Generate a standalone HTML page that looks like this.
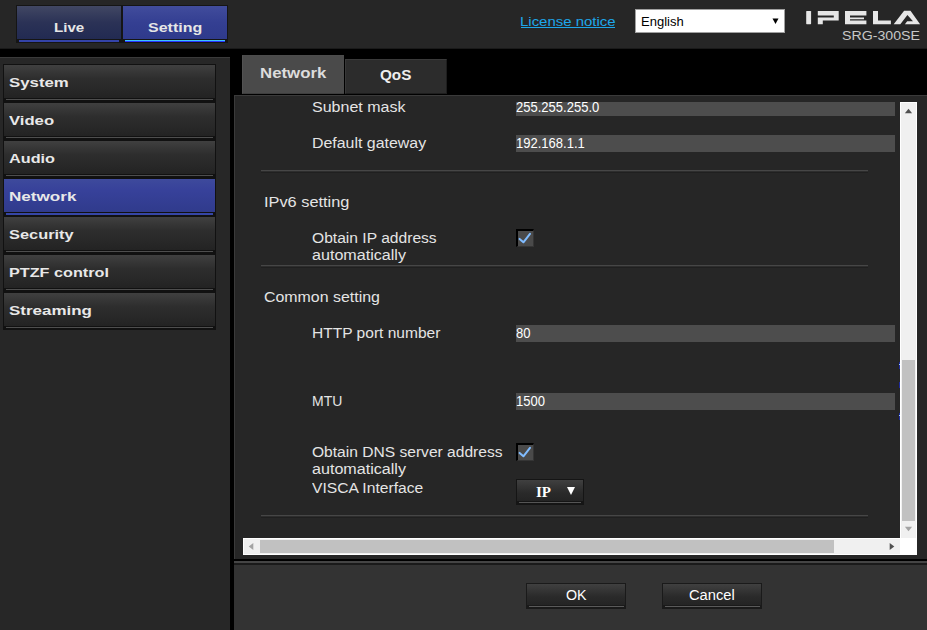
<!DOCTYPE html>
<html><head><meta charset="utf-8">
<style>
*{margin:0;padding:0;box-sizing:border-box}
html,body{width:927px;height:630px;overflow:hidden;background:#000}
body{position:relative;font-family:"Liberation Sans",sans-serif}
.a{position:absolute}
.t{position:absolute;white-space:nowrap;line-height:20px;height:20px}
.lbl{font-size:14px;color:#e4e4e4;transform:scaleX(1.12);transform-origin:0 0}
.val{font-size:14px;color:#fff;transform:scaleX(0.93);transform-origin:0 0}
.sb{position:absolute;left:3px;width:213px;height:38px;background:#111}
.sb .in{position:absolute;left:1px;top:1px;width:211px;height:33px;background:linear-gradient(#404040,#2e2e2e 40%,#232323)}
.sb .ln{position:absolute;left:3px;top:35px;width:207px;height:1px;background:#4e4e4e}
.sb .tx{position:absolute;left:6px;top:9px;font:bold 13.5px/20px "Liberation Sans",sans-serif;color:#e8e8e8;white-space:nowrap;transform:scaleX(1.2);transform-origin:0 0}
.sb.act .in{background:linear-gradient(#3e4a9c,#37419a 35%,#303b8c)}
.sb.act .ln{background:#3646a6;height:2px;top:35px}
.inp{position:absolute;left:516px;width:379px;background:#4d4d4d}
.sep{position:absolute;left:261px;width:607px;height:3px;background:linear-gradient(#464646 0,#464646 1px,#2d2d2d 1px,#2d2d2d 2px,#1f1f1f 2px)}
.cb{position:absolute;left:516px;width:18px;height:18px;background:#4a4a4a;border-top:2px solid #000;border-left:2px solid #000;border-right:1px solid #353535;border-bottom:1px solid #353535}
.btn{position:absolute;top:583px;width:100px;height:26px;background:#1a1a1a}
.btn .in{position:absolute;left:1px;top:1px;width:98px;height:21px;background:linear-gradient(#404040,#2a2a2a 60%,#242424)}
.btn .ln{position:absolute;left:3px;top:23px;width:95px;height:1px;background:#5a5a5a}
.btn .tx{position:absolute;left:0;width:100px;top:2px;text-align:center;font:14px/20px "Liberation Sans",sans-serif;color:#fff}
</style></head><body>

<!-- header -->
<div class="a" style="left:0;top:0;width:927px;height:49px;background:#262626"></div>
<div class="a" style="left:0;top:48px;width:927px;height:1px;background:#1a1a1a"></div>
<div class="a" style="left:16px;top:5px;width:106px;height:38px;background:#151515"></div>
<div class="a" style="left:17px;top:6px;width:104px;height:33px;background:linear-gradient(#414763,#2b3256 50%,#222a52)"></div>
<div class="a" style="left:19px;top:40px;width:100px;height:2px;background:#3443a8"></div>
<div class="a" style="left:122px;top:5px;width:106px;height:38px;background:#151515"></div>
<div class="a" style="left:123px;top:6px;width:104px;height:33px;background:linear-gradient(#414c9c,#343f92 50%,#2f3a8c)"></div>
<div class="a" style="left:125px;top:40px;width:100px;height:1px;background:#3cc4ff"></div>
<div class="a" style="left:125px;top:41px;width:100px;height:1px;background:#2a36ff"></div>
<div class="t" style="left:54px;top:18px;font-weight:bold;font-size:13px;color:#e6e6e6;transform:scaleX(1.16);transform-origin:0 0">Live</div>
<div class="t" style="left:148px;top:18px;font-weight:bold;font-size:13px;color:#e6e6e6;transform:scaleX(1.23);transform-origin:0 0">Setting</div>

<div class="t" style="left:520px;top:12px;font-size:13px;color:#1ea6ea;transform:scaleX(1.15);transform-origin:0 0">License notice</div>
<div class="a" style="left:521px;top:27px;width:94px;height:1px;background:#1ea6ea"></div>

<div class="a" style="left:635px;top:9px;width:150px;height:24px;background:#fff;border:1px solid #a0a0a0"></div>
<div class="t" style="left:641px;top:12px;font-size:13px;color:#000">English</div>
<svg class="a" style="left:771px;top:17px" width="9" height="8"><path d="M1.5 1.5h6l-3 5.5z" fill="#000"/></svg>

<svg class="a" style="left:800px;top:5px" width="127" height="25" viewBox="800 5 127 25">
<g fill="#e6e6e6">
<rect x="806.2" y="11" width="4.9" height="13.2" rx="0.6"/>
<path d="M817.8 11H838.7V20.5H822.8V24.2H817.8V17.4H833.8V15.4H817.8Z"/>
<path d="M845 11H866.4V15.4H850V17.4H864V19.2H850V20.5H866.4V24.2H845Z"/>
<path d="M873 11H878V20.5H890.9V24.2H873Z"/>
<path d="M893.7 24.3L904.1 10.8H910.5L920.1 24.3H904.9L907.2 21.3H913L907.4 14.9L900.3 24.3Z"/>
</g></svg>
<div class="t" style="left:842px;top:26px;font-size:12px;color:#c8c8c8;transform:scaleX(1.18);transform-origin:0 0">SRG-300SE</div>

<!-- left panel -->
<div class="a" style="left:0;top:57px;width:230px;height:573px;background:#272727;border-top:1px solid #3a3a3a"></div>
<div class="sb" style="top:64px"><div class="in"></div><div class="ln"></div><div class="tx" style="transform:scaleX(1.244)">System</div></div>
<div class="sb" style="top:102px"><div class="in"></div><div class="ln"></div><div class="tx" style="transform:scaleX(1.234)">Video</div></div>
<div class="sb" style="top:140px"><div class="in"></div><div class="ln"></div><div class="tx" style="transform:scaleX(1.204)">Audio</div></div>
<div class="sb act" style="top:178px"><div class="in"></div><div class="ln"></div><div class="tx" style="transform:scaleX(1.266)">Network</div></div>
<div class="sb" style="top:216px"><div class="in"></div><div class="ln"></div><div class="tx" style="transform:scaleX(1.213)">Security</div></div>
<div class="sb" style="top:254px"><div class="in"></div><div class="ln"></div><div class="tx" style="transform:scaleX(1.200)">PTZF control</div></div>
<div class="sb" style="top:292px"><div class="in"></div><div class="ln"></div><div class="tx" style="transform:scaleX(1.257)">Streaming</div></div>

<!-- tabs -->
<div class="a" style="left:242px;top:55px;width:102px;height:39px;background:#4a4a4a;border-top:1px solid #4c4c4c;border-left:1px solid #525252;border-bottom:1px solid #3e3e3e"></div>
<div class="t" style="left:260px;top:63px;font-weight:bold;font-size:14px;color:#dcdcdc;transform:scaleX(1.2);transform-origin:0 0">Network</div>
<div class="a" style="left:345px;top:59px;width:102px;height:35px;background:#2c2c2c;border-left:1px solid #383838;border-top:1px solid #3a3a3a;border-right:1px solid #1e1e1e;border-bottom:1px solid #1e1e1e"></div>
<div class="t" style="left:380px;top:65px;font-weight:bold;font-size:14px;color:#eee;transform:scaleX(1.09);transform-origin:0 0">QoS</div>

<!-- content panel -->
<div class="a" style="left:234px;top:95px;width:693px;height:464px;background:#262626;border-top:1px solid #3a3a3a;border-left:1px solid #3a3a3a"></div>

<div class="t lbl" style="left:312px;top:97px;transform:scaleX(1.145)">Subnet mask</div>
<div class="inp" style="top:102px;height:14px;overflow:hidden"><div class="t val" style="left:0;top:-5px">255.255.255.0</div></div>
<div class="t lbl" style="left:312px;top:133px;transform:scaleX(1.137)">Default gateway</div>
<div class="inp" style="top:135px;height:17px"></div>
<div class="t val" style="left:516px;top:133px">192.168.1.1</div>
<div class="sep" style="top:170px"></div>

<div class="t lbl" style="left:264px;top:192px;transform:scaleX(1.167)">IPv6 setting</div>
<div class="t lbl" style="left:312px;top:228px;transform:scaleX(1.115)">Obtain IP address</div>
<div class="t lbl" style="left:312px;top:245px;transform:scaleX(1.15)">automatically</div>
<div class="cb" style="top:229px"><svg class="a" style="left:0;top:0" width="16" height="16" viewBox="518 231 16 16"><path d="M519.6 238.9L523.4 242.3L530 233.8" stroke="#80bcff" stroke-width="2" fill="none" stroke-linecap="round" stroke-linejoin="round"/></svg></div>
<div class="sep" style="top:265px"></div>

<div class="t lbl" style="left:264px;top:287px;transform:scaleX(1.137)">Common setting</div>
<div class="t lbl" style="left:312px;top:323px;transform:scaleX(1.11)">HTTP port number</div>
<div class="inp" style="top:325px;height:17px"></div>
<div class="t val" style="left:516px;top:323px">80</div>
<div class="t lbl" style="left:312px;top:391px;transform:scaleX(1.0)">MTU</div>
<div class="inp" style="top:393px;height:17px"></div>
<div class="t val" style="left:516px;top:391px">1500</div>
<div class="t lbl" style="left:312px;top:442px;transform:scaleX(1.113)">Obtain DNS server address</div>
<div class="t lbl" style="left:312px;top:459px;transform:scaleX(1.15)">automatically</div>
<div class="cb" style="top:443px"><svg class="a" style="left:0;top:0" width="16" height="16" viewBox="518 231 16 16"><path d="M519.6 238.9L523.4 242.3L530 233.8" stroke="#80bcff" stroke-width="2" fill="none" stroke-linecap="round" stroke-linejoin="round"/></svg></div>
<div class="t lbl" style="left:312px;top:478px;transform:scaleX(1.116)">VISCA Interface</div>
<div class="a" style="left:516px;top:479px;width:68px;height:26px;background:#151515"></div>
<div class="a" style="left:517px;top:480px;width:66px;height:21px;background:linear-gradient(#404040,#2a2a2a 60%,#242424)"></div>
<div class="a" style="left:519px;top:502px;width:62px;height:1px;background:#555"></div>
<div class="t" style="left:536px;top:482px;font:bold 15px/20px 'Liberation Serif',serif;color:#fff">IP</div>
<svg class="a" style="left:566px;top:486px" width="10" height="10"><path d="M1 1h8l-4 8z" fill="#fff"/></svg>
<div class="sep" style="top:515px"></div>

<!-- scrollbars -->
<div class="a" style="left:900px;top:102px;width:17px;height:436px;background:#f0f0f0;border-left:1px solid #fff;border-top:1px solid #fff;border-right:1px solid #fff"></div>
<svg class="a" style="left:904px;top:108px" width="9" height="6"><path d="M0.9 5.3L4.5 0.7L8.1 5.3z" fill="#505050"/></svg>
<div class="a" style="left:902px;top:360px;width:13px;height:161px;background:#c1c1c1"></div>
<svg class="a" style="left:904px;top:526px" width="9" height="6"><path d="M0.9 0.7L4.5 5.3L8.1 0.7z" fill="#a3a3a3"/></svg>
<div class="a" style="left:243px;top:538px;width:657px;height:17px;background:#f0f0f0;border-left:1px solid #fff;border-top:1px solid #fff;border-bottom:1px solid #fff"></div>
<svg class="a" style="left:248px;top:542px" width="6" height="9"><path d="M5.3 0.9L0.7 4.5L5.3 8.1z" fill="#a3a3a3"/></svg>
<div class="a" style="left:260px;top:540px;width:574px;height:13px;background:#c1c1c1"></div>
<svg class="a" style="left:889px;top:542px" width="6" height="9"><path d="M0.7 0.9L5.3 4.5L0.7 8.1z" fill="#505050"/></svg>
<div class="a" style="left:900px;top:538px;width:17px;height:17px;background:#fff"></div>

<div class="a" style="left:899px;top:362px;width:1px;height:7px;background:#1e2a9a"></div>
<div class="a" style="left:899px;top:364px;width:1px;height:1px;background:#9fd0ff"></div>
<div class="a" style="left:899px;top:382px;width:1px;height:6px;background:#1e2a9a"></div>
<div class="a" style="left:899px;top:413px;width:1px;height:7px;background:#1e2a9a"></div>
<div class="a" style="left:899px;top:415px;width:1px;height:1px;background:#9fd0ff"></div>
<!-- bottom panel -->
<div class="a" style="left:234px;top:561px;width:693px;height:69px;background:#333"></div>
<div class="a" style="left:234px;top:561px;width:693px;height:2px;background:#454545"></div>
<div class="a" style="left:234px;top:563px;width:693px;height:2px;background:#1a1a1a"></div>
<div class="btn" style="left:526px"><div class="in"></div><div class="ln"></div><div class="tx" style="left:40px;width:auto;text-align:left;transform:scaleX(1.02);transform-origin:0 0">OK</div></div>
<div class="btn" style="left:662px"><div class="in"></div><div class="ln"></div><div class="tx" style="left:27px;width:auto;text-align:left;transform:scaleX(1.05);transform-origin:0 0">Cancel</div></div>

</body></html>
